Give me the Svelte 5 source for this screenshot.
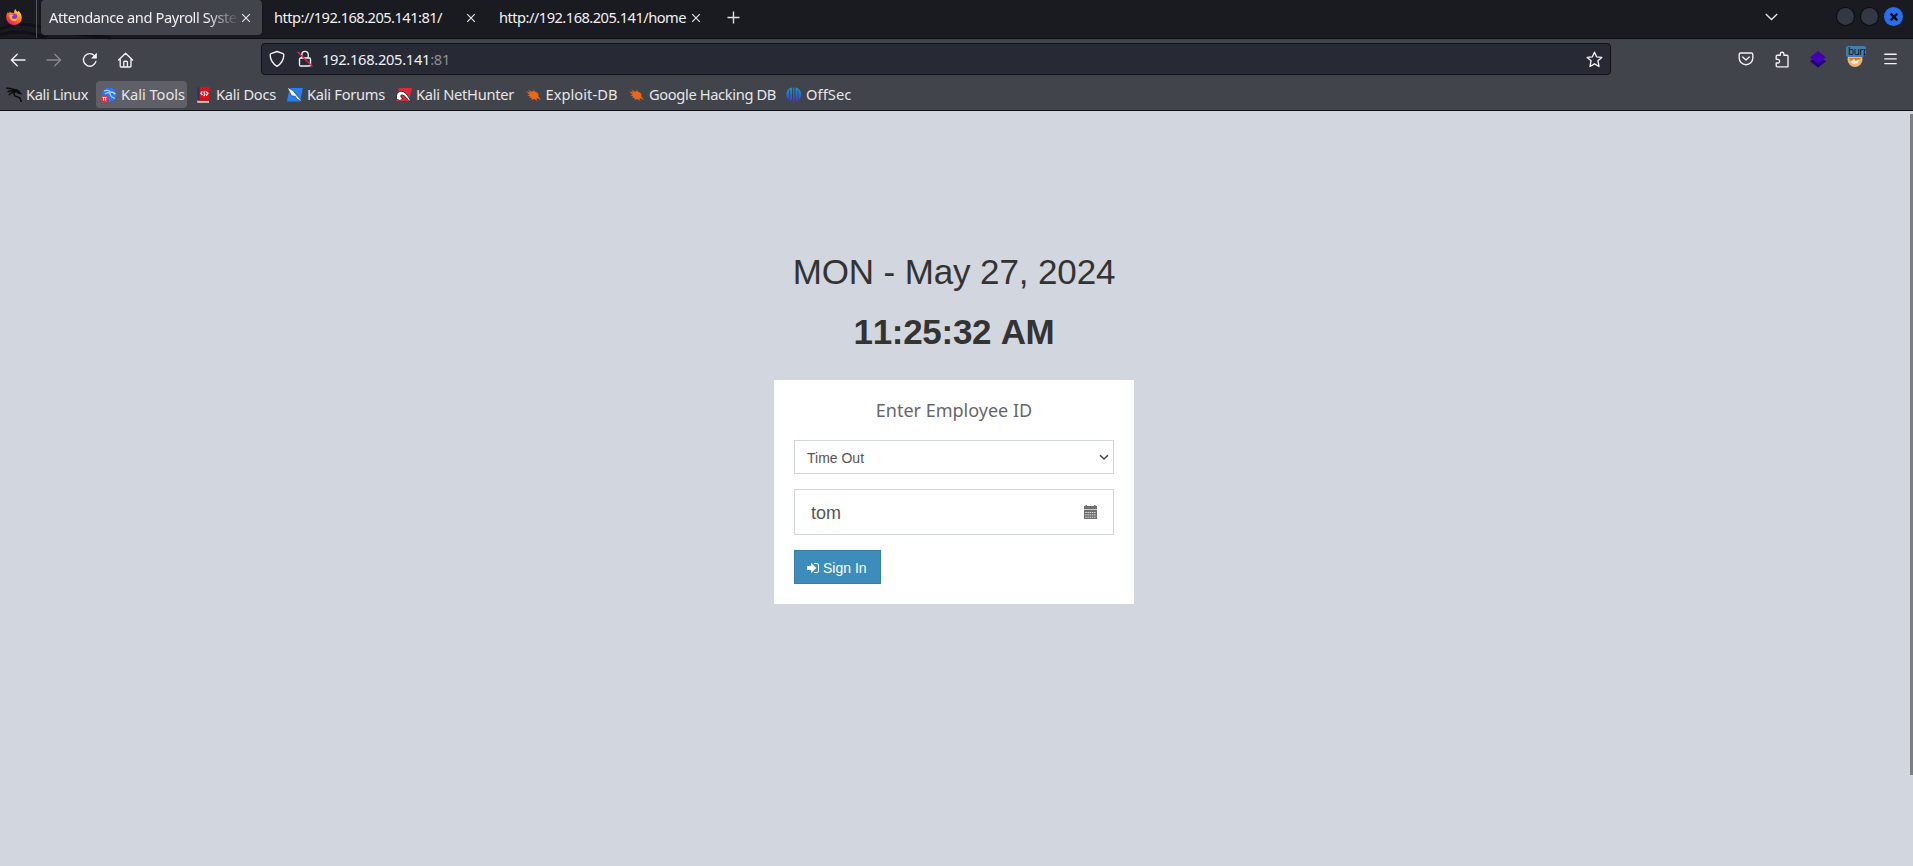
<script>
  const tabs = [
    { title: 'Attendance and Payroll System', active: true, text: 201 },
    { title: 'http://192.168.205.141:81/', active: false, text: 168 },
    { title: 'http://192.168.205.141/home', active: false, text: 187 }
  ];
  const bookmarks = [
    { icon: 'linux', label: 'Kali Linux', w: 91, text: 62 },
    { icon: 'tools', label: 'Kali Tools', w: 91, text: 64, hover: true },
    { icon: 'docs', label: 'Kali Docs', w: 87, text: 60 },
    { icon: 'forums', label: 'Kali Forums', w: 105, text: 78 },
    { icon: 'hunter', label: 'Kali NetHunter', w: 125.5, text: 98 },
    { icon: 'bug', label: 'Exploit-DB', w: 99.5, text: 72 },
    { icon: 'bug', label: 'Google Hacking DB', w: 153, text: 127 },
    { icon: 'offsec', label: 'OffSec', w: 75, text: 45.5 }
  ];
  let mode = $state('out');
  let employee = $state('tom');

  // Tightens the tracking so a label takes exactly the given width.
  function fit(node, width) {
    const natural = node.getBoundingClientRect().width;
    node.style.letterSpacing = (width - natural) / node.textContent.length + 'px';
  }
</script>

<div class="window">
  <header class="strip">
    <svg class="swirl" viewBox="0 0 260 38"><path d="M0 29Q18 22 36 26Q70 34 111 38M0 35Q20 28 46 38" /></svg>
    <div class="fox">
      <svg width="16" height="16" viewBox="0 0 16 16">
        <defs>
          <linearGradient id="fx" x1=".9" y1="0" x2=".2" y2="1"><stop offset="0" stop-color="#fff44f" /><stop offset=".4" stop-color="#ff980e" /><stop offset=".75" stop-color="#ff3647" /><stop offset="1" stop-color="#e31587" /></linearGradient>
          <linearGradient id="fg" x1="0" y1="0" x2="0" y2="1"><stop offset="0" stop-color="#b833e1" /><stop offset="1" stop-color="#5b2de0" /></linearGradient>
        </defs>
        <path fill="url(#fx)" d="M1.6 3.2Q2.6 3.7 3 4.2L3.9 2.2Q4.3 3.7 5.5 3.8Q7 3.6 8 4.2Q7.8 1.5 9.6 0Q9.7 2 11.8 3L12.6 1.8Q15.9 5 15.8 8.8A7.8 7.3 0 0 1 .2 8.6Q.2 5.2 1.6 3.2Z" />
        <circle cx="8" cy="7.8" r="3.3" fill="url(#fg)" />
        <path fill="#ffb72c" d="M3.2 6.1Q5.2 4.8 7.9 6L6.2 7.2Q5.2 9.3 8 9.9Q10.5 9.8 11.3 8.2Q11 12 7.8 12.2Q3.4 11.5 3.2 6.1Z" />
      </svg>
    </div>
    <div class="tabs">
      {#each tabs as tab}
        <div class="tab" class:active={tab.active}>
          <div class="title"><span use:fit={tab.text}>{tab.title}</span></div>
          <svg class="x" width="8" height="8" viewBox="0 0 8 8"><path d="M.2.2 7.8 7.8M7.8.2.2 7.8" /></svg>
        </div>
      {/each}
    </div>
    <svg class="plus" width="13" height="13" viewBox="0 0 13 13"><path d="M6.5.5V12.5M.5 6.5H12.5" /></svg>
    <svg class="chev" width="13" height="8" viewBox="0 0 13 8"><path d="M.8 1 6.5 6.6 12.2 1" /></svg>
    <div class="buttons">
      <i></i><i></i>
      <i class="close"><svg width="10" height="10" viewBox="0 0 10 10"><path d="M1.7 1.7 8.3 8.3M8.3 1.7 1.7 8.3" /></svg></i>
    </div>
  </header>

  <nav class="toolbar">
    <div class="left">
      <svg width="16" height="16" viewBox="0 0 16 16"><path d="M15 8H1.5M7.2 2.2 1.4 8 7.2 13.8" /></svg>
      <svg class="dim" width="16" height="16" viewBox="0 0 16 16"><path d="M1 8H14.5M8.8 2.2 14.6 8 8.8 13.8" /></svg>
      <svg width="16" height="16" viewBox="0 0 16 16"><path d="M13.9 9.4A6.3 6.3 0 1 1 12.4 3.6" /><path d="M14.8 .8V6.6H9Z" fill="#fbfbfe" stroke="none" /></svg>
      <svg width="16" height="16" viewBox="0 0 16 16"><path d="M.6 8 7.6 1.2 14.6 8M2.2 6.8V14.1Q2.2 15 3.1 15H12.1Q13 15 13 14.1V6.8M5.8 15V10.1Q5.8 9.2 6.7 9.2H8.5Q9.4 9.2 9.4 10.1V15" /></svg>
    </div>
    <div class="url">
      <svg width="16" height="18" viewBox="0 0 16 18"><path d="M8 1.5 14 3.7Q15 4.1 14.8 5.4Q14.4 12.5 8 16.3Q1.6 12.5 1.2 5.4Q1 4.1 2 3.7Z" /></svg>
      <svg width="16" height="18" viewBox="0 0 16 18"><path d="M4.8 7.5V4.6A3.2 3.2 0 0 1 11.2 4.6V7.5" /><rect x="2.5" y="8" width="11" height="8" rx="1.2" /><path class="slash" d="M1 2.3 15 16" /></svg>
      <span class="addr" use:fit={128}>192.168.205.141<em>:81</em></span>
      <svg class="star" width="17" height="17" viewBox="0 0 17 17"><path d="M8.5 1.2 10.6 5.8 15.8 6.4 11.9 9.7 13 15.5 8.5 12.8 4 15.5 5.1 9.7 1.2 6.4 6.4 5.8Z" /></svg>
    </div>
    <div class="right">
      <svg width="16" height="16" viewBox="0 0 16 16"><path d="M2.8 2H13.2Q14.8 2 14.8 3.6V7.3A6.8 6.4 0 0 1 1.2 7.3V3.6Q1.2 2 2.8 2ZM4.7 6 8 9 11.3 6" /></svg>
      <svg width="16" height="17" viewBox="0 0 16 17"><path d="M2.2 5.2Q2.2 4.2 3.2 4.2H6.3V3A1.8 1.8 0 0 1 9.9 3V4.2H13Q14 4.2 14 5.2V15.8H3.2Q2.2 15.8 2.2 14.8V12H3.8A1.7 1.7 0 0 0 3.8 8.3H2.2Z" /></svg>
      <svg width="16" height="17" viewBox="0 0 16 17" class="nostroke"><path fill="#20007a" d="M0 10.2 3 8.5H13L16 10.2 8 16.4Z" /><path fill="#4400b4" d="M8 0 16 6.4 8 12.8 0 6.4Z" /></svg>
      <div class="burp">
        <svg width="16" height="20" viewBox="0 0 16 20" class="nostroke"><circle cx="8" cy="12.5" r="7.5" fill="#e9b675" /><path fill="#e07a20" d="M2 11H14L11 16 4 15Z" /><path fill="#f6e7d0" d="M3 14.8 7 12 8.5 14 13 12.2 10.5 16.5 6 17Z" /></svg>
        <span>burp</span>
      </div>
      <svg width="13" height="12" viewBox="0 0 13 12"><path d="M.8 1.2H12.2M.8 5.9H12.2M.8 10.6H12.2" /></svg>
    </div>
  </nav>

  <div class="bookmarks">
    {#each bookmarks as b}
      <div class="bm" class:hover={b.hover} style:width="{b.w}px">
        <svg width="16" height="16" viewBox="0 0 16 16">
          {#if b.icon === 'linux'}
            <path d="M.3 1.2Q5 .8 8.8 2.8Q12 2.8 13.5 5.3M1.6 4.8Q5 2.9 9 4.2M3 8Q5 5.1 8.6 5.4Q6.8 8.6 10.5 9.6Q14.6 10.2 15.2 15M9 4.4Q12 4.2 14.3 6.4L11.6 6" fill="none" stroke="#0b0b0d" stroke-width="1.5" />
          {:else if b.icon === 'tools'}
            <circle cx="8.2" cy="7.6" r="7.2" fill="#2777ff" />
            <path d="M3 4Q7 2.5 9.6 5Q13 5 14.2 7.4M4 7Q7 4.5 9.2 6.6Q8.8 9.5 13.8 11.4" fill="none" stroke="#b8d7ff" stroke-width="1.3" />
            <circle cx="3.6" cy="11.8" r="4" fill="#e52d36" />
            <path d="M1.4 10.4H5.8M2.6 10.4V13.8M4.6 10.4V13.8" stroke="#fff" stroke-width="1" />
          {:else if b.icon === 'docs'}
            <path d="M1.3 0H13.5V13H1.3Z" fill="#dd1015" /><path d="M1.3 0H3.6V13H1.3Z" fill="#173a77" /><path d="M1.3 13.5H13V15.8H1.3Z" fill="#d9c7c9" /><path d="M2 12.6H13.5V13.8H2Z" fill="#aa1018" />
            <path d="M6.3 4.4 4.9 6.4 6.5 8M10.2 4.8 11.9 6.4 10.2 8.6M9.3 4.4Q7.1 4.6 8.4 6.4T7.5 8.8" fill="none" stroke="#fff" stroke-width="1.2" />
          {:else if b.icon === 'forums'}
            <path d="M2.5 1H15.8L13.3 14.5H0Z" fill="#2381f7" />
            <path d="M0 0 6 3.5 9.7 8.2 15.7 14.8 10 12.2 8.4 9.4 4.5 8.7Z" fill="#f4f4f6" stroke="#24262b" stroke-width=".6" />
          {:else if b.icon === 'hunter'}
            <path d="M3 1H16L13 14H0Z" fill="#e32636" />
            <path d="M.5 12Q-.5 5 5 4.2Q9.5 3.8 15.3 14.5L12.8 13.7Q7.7 6.8 5 8.2Q4 9.5 6.7 12.2Q4 15 .5 12Z" fill="#fff" stroke="#24262b" stroke-width=".9" />
          {:else if b.icon === 'bug'}
            <path d="M.2 4.6 4.4 5.4 2.2 2.4 5.6 4.6 7.4 4.2 8 2.6 8.6 4.6 11.4 5.8 12.6 7.6 12.2 9.3 15 13 11.2 11.2 10.4 11.6 11.6 14 8.2 12 5.4 13 6 11.2 3 10.6 4.6 9.6 1.2 8.6 3.6 7.8Z" fill="#ed6517" />
          {:else}
            <defs><linearGradient id="os" gradientUnits="userSpaceOnUse" x1="0" y1="1" x2="0" y2="15"><stop offset="0" stop-color="#109bc4" /><stop offset="1" stop-color="#4b32d3" /></linearGradient></defs>
            <path fill="url(#os)" d="M6 .6V12.5Q5 15.2 3.8 13.8Q.3 11 .3 7.5Q.8 1.6 6 .6ZM9.6 .6V12.5Q10.8 15.2 12 13.8Q15.3 11 15.3 7.5Q14.8 1.6 9.6 .6ZM7.2 .4H8.4V15.6H7.2Z" />
            <path d="M3.6 3V13M12 3V13" stroke="#343780" stroke-width=".7" />
          {/if}
        </svg>
        <span use:fit={b.text}>{b.label}</span>
      </div>
    {/each}
  </div>

  <main>
    <div class="login">
      <p class="date">MON - May 27, 2024</p>
      <p class="time">11:25:32 AM</p>
      <form class="card" onsubmit={(e) => e.preventDefault()}>
        <h4>Enter Employee ID</h4>
        <div class="select">
          <select bind:value={mode}>
            <option value="in">Time In</option>
            <option value="out">Time Out</option>
          </select>
          <svg width="10" height="7" viewBox="0 0 10 7"><path d="M1 1.2 5 5 9 1.2" /></svg>
        </div>
        <div class="field">
          <input type="text" bind:value={employee} />
          <svg width="13" height="14" viewBox="0 0 13 14">
            <path fill="#6f6f6f" d="M0 1H1.5V0H3V1H10V0H11.5V1H13V4H0Z" />
            <path fill="#c9c9c9" d="M0 4H13V5H0Z" />
            <path fill="#6f6f6f" d="M0 5H13V14H0Z" />
            <path stroke="#dcdcdc" stroke-width="1" stroke-dasharray="1.5 .7" d="M1.2 7.5H12M1.2 9.8H12M1.2 12.2H12" />
          </svg>
        </div>
        <button type="submit">
          <svg width="12" height="10" viewBox="128 256 1536 1280"><path fill="#fff" d="M1312 896q0 26-19 45l-544 544q-19 19-45 19t-45-19-19-45v-288h-448q-26 0-45-19t-19-45v-384q0-26 19-45t45-19h448v-288q0-26 19-45t45-19 45 19l544 544q19 19 19 45zm352-352v704q0 119-84.5 203.500t-203.500 84.500h-320q-13 0-22.500-9.500t-9.500-22.500q0-4-1-20t-.5-26.500 3-23.500 10-19.500 20.500-6.500h320q66 0 113-47t47-113v-704q0-66-47-113t-113-47h-312l-11.500-1-11.500-3-8-5.500-7-9-2-13.500q0-4-1-20t-.5-26.500 3-23.500 10-19.500 20.500-6.500h320q119 0 203.500 84.500t84.500 203.500z" /></svg>
          <span>Sign In</span>
        </button>
      </form>
    </div>
    <div class="scroll"></div>
  </main>
</div>

<style>
  :global(body) { margin: 0; overflow: hidden; }
  .window { width: 1913px; height: 866px; display: flex; flex-direction: column; font-family: "Noto Sans", sans-serif; font-size: 14.67px; color: #f0f0f3; overflow: hidden; }
  .window * { box-sizing: border-box; }
  svg { display: block; flex: none; overflow: visible; }
  .strip { height: 39px; background: #1a1b20; border-bottom: 1px solid #0d0e12; display: flex; position: relative; flex: none; }
  .swirl { position: absolute; left: 0; top: 0; width: 260px; height: 38px; fill: none; stroke: #101116; stroke-width: 3; }
  .fox { width: 37px; height: 38px; border-right: 1px solid #55565b; padding: 9px 0 0 6px; position: relative; }
  .tabs { display: flex; margin-left: 4px; gap: 4px; position: relative; }
  .tab { width: 221px; height: 35px; padding: 0 12px 0 8px; display: flex; align-items: center; justify-content: space-between; border-radius: 0 0 4px 4px; }
  .tab.active { background: #42444b; border-radius: 4px; box-shadow: 0 0 2px #0008; }
  .title { width: 190px; overflow: hidden; white-space: nowrap; line-height: 35px; }
  .active .title { mask-image: linear-gradient(to left, transparent, #000 32px); }
  .x, .plus, .chev { fill: none; stroke: #e2e2e6; stroke-width: 1.2; }
  .plus { margin: 11px 0 0 15px; stroke-width: 1.4; }
  .chev { margin: 13px 0 0 auto; stroke-width: 1.4; }
  .buttons { display: flex; gap: 7px; margin: 8px 11px 0 59px; }
  .buttons i { width: 17px; height: 17px; border-radius: 50%; background: #343844; box-shadow: 0 0 0 1px #0b0c10; }
  .buttons .close { background: #2670ee; box-shadow: 0 0 0 1px #2670ee; display: grid; place-items: center; }
  .close path { stroke: #090c15; stroke-width: 2.4; }

  .toolbar { height: 36px; background: #42444b; display: flex; padding-top: 4px; flex: none; }
  .toolbar svg { fill: none; stroke: #f2f2f5; stroke-width: 1.35; stroke-linejoin: round; stroke-linecap: round; }
  .toolbar svg.nostroke { stroke: none; }
  .left { width: 261px; display: flex; gap: 20px; padding: 9px 0 0 10px; }
  .left .dim { opacity: .4; }
  .url { width: 1350px; height: 32px; background: #272935; border: 1px solid #101117; border-radius: 4px; display: flex; align-items: center; padding: 0 7px; }
  .url svg + svg { margin-left: 12px; }
  .url .slash { stroke: #e22850; }
  .addr { margin-left: 9px; white-space: nowrap; line-height: 30px; }
  em { font-style: normal; color: #8d8e96; }
  .star { margin-left: auto; }
  .right { flex: 1; display: flex; padding-left: 127px; align-items: flex-start; }
  .right > svg { margin-top: 8px; margin-right: 20px; }
  .right > svg:last-child { margin: 10px 0 0 18px; }
  .burp { width: 20px; height: 26px; display: grid; margin: 3px 0 0 0; }
  .burp > * { grid-area: 1 / 1; }
  .burp svg { margin: 1px 0 0 1px; }
  .burp span { width: 20px; height: 11px; overflow: hidden; background: #437eb0; color: #101820; font-size: 10px; line-height: 11px; letter-spacing: -.5px; padding-left: 2px; border-radius: 2px; }

  .bookmarks { height: 36px; background: #42444b; border-bottom: 1px solid #101116; display: flex; padding: 6px 0 0 1px; flex: none; gap: 4px; }
  .bm { height: 27px; flex: none; display: flex; align-items: center; gap: 4px; padding-left: 5px; padding-bottom: 1px; border-radius: 4px; white-space: nowrap; }
  .bm svg { margin-top: 1px; }
  .bm span { color: #e6e6e9; }
  .bm.hover { background: #5f6067; }

  main { flex: 1; background: #d2d6de; display: flex; justify-content: center; position: relative; font-family: "Liberation Sans", Arial, sans-serif; color: #333; }
  .login { width: 360px; margin-right: 5px; padding-top: 135px; text-align: center; }
  p { margin: 0; font-size: 35px; line-height: 51px; white-space: nowrap; }
  .date { height: 60px; letter-spacing: -.12px; }
  .time { font-weight: bold; height: 74px; font-kerning: none; letter-spacing: -.3px; }
  .card { background: #fff; height: 224px; padding: 20px; display: flex; flex-direction: column; align-items: flex-start; color: #666; }
  h4 { margin: 0; width: 100%; font: 18px/20px "Noto Sans", sans-serif; }
  .select { width: 320px; height: 34px; margin-top: 20px; border: 1px solid #d2d6de; display: flex; align-items: center; padding-right: 4px; }
  select { appearance: none; flex: 1; border: 0; background: none; padding: 2px 0 0 12px; font: 14px/20px "Liberation Sans", sans-serif; color: #555; outline: none; }
  .select path { fill: none; stroke: #444; stroke-width: 1.5; }
  .field { width: 320px; height: 46px; margin-top: 15px; border: 1px solid #d2d6de; display: flex; align-items: center; padding: 0 16px; }
  input { flex: 1; min-width: 0; border: 0; padding: 2px 0 0; font: 18px/24px "Liberation Sans", sans-serif; color: #555; background: none; outline: none; }
  button { width: 87px; height: 34px; margin-top: 15px; background: #3c8dbc; border: 1px solid #367fa9; color: #fff; font: 14px/20px "Liberation Sans", sans-serif; padding: 2px 0 0 12px; display: flex; align-items: center; gap: 4px; white-space: nowrap; }
  .scroll { position: absolute; right: 0; top: 3px; width: 3px; height: 661px; background: #7b7e82; }
</style>
